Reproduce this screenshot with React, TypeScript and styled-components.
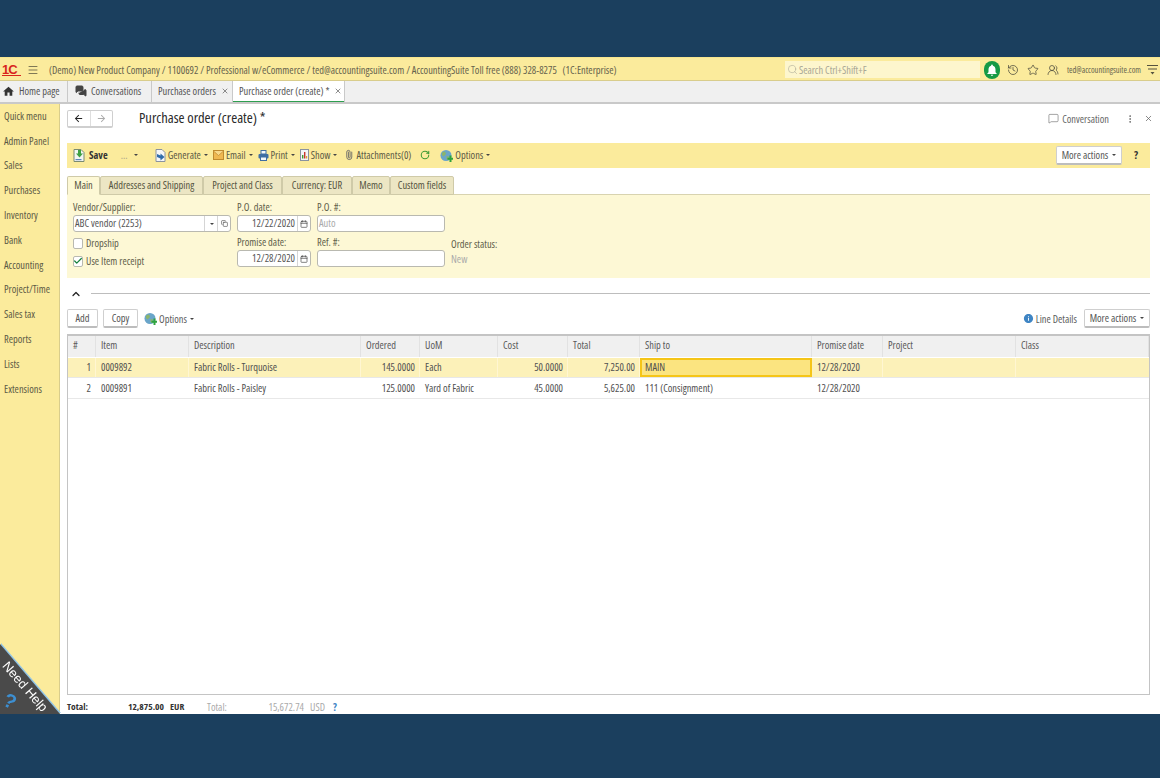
import React from 'react';
import styled, { createGlobalStyle } from 'styled-components';
import { MdHome, MdNotifications, MdInfo, MdArrowBack, MdArrowForward } from 'react-icons/md';
import {
  Menu, Search, History, Star, UsersRound, MessageSquare, MessagesSquare, EllipsisVertical, X,
  Paperclip, RotateCw, Calendar, Copy, Check, ChevronUp,
} from 'lucide-react';

const GlobalStyle = createGlobalStyle`
  html, body { margin: 0; padding: 0; background: #1b3f5e; }
  body {
    font-family: "Open Sans", "Liberation Sans", Arial, sans-serif;
    font-stretch: 75%;
    font-size: 10.4px;
    line-height: 12px;
    color: #555;
  }
  * { box-sizing: border-box; }
  svg { flex: none; }
`;

const Page = styled.div`
  width: 1160px;
  height: 778px;
  padding: 57px 0 64px;
  background: #1b3f5e;
`;

const Screen = styled.div`
  position: relative;
  height: 657px;
  background: #fff;
  display: flex;
  flex-direction: column;
  overflow: hidden;
`;

const TopBar = styled.div`
  height: 24px;
  padding: 1px 2px 0 2px;
  background: #fbeb9c;
  border-top: 1px solid #f6e58f;
  border-bottom: 1px solid #d9cd8c;
  display: flex;
  align-items: center;
  flex: none;
`;

const Logo = styled.span`
  width: 19px;
  font-family: "Liberation Sans", sans-serif;
  font-size: 13px;
  line-height: 11px;
  font-weight: 700;
  letter-spacing: -1px;
  color: #d8251c;
  border-bottom: 1px solid #d8251c;
`;

const BarText = styled.span`
  margin-left: 10px;
  color: #65624c;
  white-space: pre;
`;

const SearchBox = styled.div`
  margin-left: auto;
  width: 195px;
  height: 17px;
  background: #fdf6cd;
  display: flex;
  align-items: center;
  gap: 1px;
  padding-left: 2px;
  color: #a9a795;
`;

const BellBadge = styled.span`
  margin-left: 4px;
  width: 16px;
  height: 18px;
  border-radius: 8px;
  background: #169a45;
  color: #fff;
  display: flex;
  align-items: center;
  justify-content: center;
`;

const TopIcons = styled.div`
  display: flex;
  align-items: center;
  gap: 8px;
  margin-left: 7px;
  color: #4b4a3c;
`;

const UserMail = styled.span`
  margin-left: 8px;
  font-size: 8.4px;
  color: #65624c;
`;

const MenuEnd = styled.span`
  display: flex;
  margin-left: 6px;
  color: #55523e;
`;

const TabStrip = styled.div`
  height: 23px;
  flex: none;
  background: #f0f0f0;
  border-bottom: 2px solid #c9c9c9;
  display: flex;
`;

const WinTab = styled.div<{ $width: number; $active?: boolean }>`
  width: ${p => p.$width}px;
  border-right: 1px solid #c9c9c9;
  display: flex;
  align-items: center;
  gap: 4px;
  padding: 0 3px 1px 6px;
  color: #555;
  background: ${p => (p.$active ? '#fff' : 'transparent')};
  box-shadow: ${p => (p.$active ? 'inset 0 -1px 0 #2e9e4f' : 'none')};
  white-space: nowrap;
`;

const HomeIcon = styled(MdHome)`
  margin-left: -4px;
  color: #333;
`;

const ChatIcon = styled(MessagesSquare)`
  margin-left: 1px;
  color: #444;
  fill: #444;
`;

const TabClose = styled(X)`
  margin-left: auto;
  flex: none;
`;

const Body = styled.div`
  flex: 1;
  min-height: 0;
  display: flex;
`;

const Sidebar = styled.nav`
  width: 60px;
  flex: none;
  background: #fbeb9c;
  border-right: 1px solid #d9cd8c;
  display: flex;
  flex-direction: column;
`;

const SideItem = styled.div`
  height: 24.8px;
  padding: 0 0 1px 4px;
  display: flex;
  align-items: center;
  color: #5c5a45;
  white-space: nowrap;
`;

const Main = styled.main`
  flex: 1;
  min-width: 0;
  padding: 6px 10px 0 7px;
  display: flex;
  flex-direction: column;
`;

const HeadRow = styled.div`
  height: 18px;
  display: flex;
  align-items: center;
  flex: none;
`;

const NavGroup = styled.div`
  width: 46px;
  height: 18px;
  border: 1px solid #cfcfcf;
  border-bottom-width: 2px;
  border-radius: 2px;
  display: flex;
  color: #333;
`;

const NavBtn = styled.span<{ $off?: boolean }>`
  flex: 1;
  display: flex;
  align-items: center;
  justify-content: center;
  color: ${p => (p.$off ? '#aaa' : '#222')};
  & + & { border-left: 1px solid #dedede; }
`;

const Title = styled.h1`
  margin: 0 0 3px 26px;
  font-size: 14.500px;
  line-height: 16px;
  font-weight: 400;
  color: #2a2a2a;
`;

const HeadRight = styled.div`
  margin-left: auto;
  margin-right: -3px;
  padding-bottom: 1px;
  display: flex;
  align-items: center;
  color: #666;
`;

const ConvLabel = styled.span`
  margin: 0 16px 0 3px;
`;

const HeadClose = styled(X)`
  margin-left: 9px;
`;

const Toolbar = styled.div`
  height: 25px;
  margin-top: 15px;
  flex: none;
  background: #fbeb9c;
  display: flex;
  align-items: center;
  padding: 0 0 1px 6px;
  color: #5c5a45;
`;

const SaveLabel = styled.b`
  margin: 0 13px 0 4px;
  color: #333;
`;

const ToolItem = styled.span<{ $gap?: number }>`
  display: flex;
  align-items: center;
  gap: 2px;
  margin-right: ${p => p.$gap ?? 6}px;
  white-space: nowrap;
`;

const Dots = styled.span`
  color: #aaa48a;
  margin-right: 3px;
`;

const Clip = styled(Paperclip)`
  transform: rotate(-45deg);
`;

const Caret = styled.i`
  display: inline-block;
  width: 0;
  height: 0;
  margin-left: 1px;
  border: 2px solid transparent;
  border-top-color: #444;
  border-bottom-width: 0;
`;

const ActionBtn = styled.button<{ $width: number }>`
  width: ${p => p.$width}px;
  height: 19px;
  padding: 0;
  background: #fff;
  border: 1px solid #cfcfcf;
  border-bottom: 2px solid #bdbdbd;
  border-radius: 2px;
  font: inherit;
  font-stretch: 75%;
  color: #555;
  white-space: nowrap;
  display: flex;
  align-items: center;
  justify-content: center;
  gap: 3px;
`;

const ToolbarEnd = styled.div`
  margin-left: auto;
  display: flex;
  align-items: center;
`;

const Help = styled.b`
  width: 28px;
  text-align: center;
  color: #333;
  font-size: 11px;
`;

const FormTabs = styled.div`
  height: 18px;
  margin-top: 8px;
  flex: none;
  display: flex;
  align-items: flex-end;
`;

const FormTab = styled.div<{ $width: number; $active?: boolean }>`
  width: ${p => p.$width}px;
  height: 19px;
  margin-bottom: -1px;
  padding-bottom: 2px;
  display: flex;
  align-items: center;
  justify-content: center;
  background: ${p => (p.$active ? '#fdf8d5' : '#ece6c4')};
  border: 1px solid #cfcaa8;
  border-bottom-color: ${p => (p.$active ? '#fdf8d5' : '#cfcaa8')};
  border-radius: 2px 2px 0 0;
  color: #55543f;
  white-space: nowrap;
  position: relative;
`;

const FormPanel = styled.section`
  height: 84px;
  flex: none;
  background: #fdf8d5;
  border-top: 1px solid #d8d3b0;
  padding: 6px 0 0 6px;
  display: grid;
  grid-template-columns: 164px 80px 134px 1fr;
  grid-template-rows: 35px 35px;
  column-gap: 0;
`;

const Field = styled.div`
  display: flex;
  flex-direction: column;
  gap: 2px;
  color: #605e4a;
`;

const StatusField = styled(Field)`
  gap: 3px;
  padding-top: 2px;
`;

const FieldBox = styled.div<{ $width: number }>`
  width: ${p => p.$width}px;
  height: 17px;
  background: #fff;
  border: 1px solid #b9b9b0;
  border-radius: 3px;
  display: flex;
  align-items: center;
  color: #555;
`;

const BoxText = styled.span<{ $right?: boolean; $muted?: boolean }>`
  flex: 1;
  padding: 0 2px 1px 1px;
  text-align: ${p => (p.$right ? 'right' : 'left')};
  color: ${p => (p.$muted ? '#aaa' : 'inherit')};
  white-space: nowrap;
`;

const BoxBtn = styled.span`
  width: 13px;
  height: 100%;
  flex: none;
  border-left: 1px solid #d5d5d5;
  display: flex;
  align-items: center;
  justify-content: center;
  color: #444;
`;

const Checks = styled.div`
  display: flex;
  flex-direction: column;
  gap: 6px;
  padding-top: 1px;
  color: #605e4a;
`;

const CheckRow = styled.label`
  display: flex;
  align-items: center;
  gap: 3px;
`;

const CheckBox = styled.span`
  width: 10px;
  height: 11px;
  background: #fff;
  border: 1px solid #b9b9b0;
  border-radius: 2px;
  display: flex;
  align-items: center;
  justify-content: center;
  color: #15803d;
`;

const MutedText = styled.span`
  color: #aaa;
`;

const Collapse = styled.div`
  height: 31px;
  flex: none;
  display: flex;
  align-items: center;
  gap: 9px;
  padding-left: 3px;
  color: #222;
`;

const Rule = styled.div`
  flex: 1;
  height: 1px;
  background: #bdbdbd;
`;

const TableBar = styled.div`
  height: 19px;
  flex: none;
  display: flex;
  align-items: center;
  gap: 3px;
  color: #5c5c5c;
`;

const BarLeft = styled.div`
  display: flex;
  align-items: center;
  gap: 5px;
`;

const BarRight = styled.div`
  margin-left: auto;
  display: flex;
  align-items: center;
  gap: 7px;
`;

const TableOptions = styled(ToolItem)`
  margin-left: 3px;
`;

const TableBox = styled.div`
  margin-top: 6px;
  height: 361px;
  flex: none;
  border: 1px solid #c4c4c4;
  border-top-width: 2px;
  border-left-width: 1px;
`;

const COLUMNS = '28px 93px 172px 59px 78px 70px 72px 172px 71px 133px 1fr';

const HeaderRow = styled.div`
  height: 21px;
  display: grid;
  grid-template-columns: ${COLUMNS};
  background: #f0f0f0;
`;

const HeaderCell = styled.div`
  display: flex;
  align-items: center;
  padding: 0 0 3px 5px;
  border-right: 1px solid #e2e2e2;
  color: #5a5a5a;
  white-space: nowrap;
`;

const DataRow = styled.div<{ $current?: boolean }>`
  height: 21px;
  display: grid;
  grid-template-columns: ${COLUMNS};
  background: ${p => (p.$current ? '#fcf1b9' : '#fff')};
  border-top: 1px solid #fff;
  border-bottom: 1px solid #e8e8e8;
`;

const Cell = styled.div<{ $right?: boolean; $focus?: boolean; $current?: boolean }>`
  display: flex;
  align-items: center;
  justify-content: ${p => (p.$right ? 'flex-end' : 'flex-start')};
  padding: ${p => (p.$right ? '0 4px 1px 0' : '0 0 1px 5px')};
  color: #505050;
  white-space: nowrap;
  background: ${p => (p.$focus ? '#fbe480' : 'transparent')};
  border-right: 1px solid ${p => (p.$current ? '#fff6d2' : 'transparent')};
  ${p => (p.$focus ? 'outline: 2px solid #f5c518; outline-offset: -2px;' : '')}
`;

const Footer = styled.div`
  height: 13px;
  margin-top: 5px;
  flex: none;
  display: grid;
  grid-template-columns: 50px 47px 43px 33px 64px 29px 12px;
  align-items: center;
`;

const FootStrong = styled.b<{ $right?: boolean }>`
  color: #333;
  font-weight: 700;
  font-size: 9.5px;
  text-align: ${p => (p.$right ? 'right' : 'left')};
`;

const FootCurrency = styled(FootStrong)`
  padding-left: 6px;
`;

const FootMuted = styled.span<{ $right?: boolean }>`
  color: #aaa;
  text-align: ${p => (p.$right ? 'right' : 'left')};
`;

const FootUnit = styled(FootMuted)`
  padding-left: 6px;
`;

const FootHelp = styled.b`
  color: #3c83c4;
`;

const HelpCorner = styled.div`
  position: absolute;
  left: 0;
  bottom: 0;
  width: 60px;
  height: 70px;
  filter: drop-shadow(1px -1px 0 #8fc4e8);
`;

const HelpShape = styled.div`
  position: relative;
  width: 100%;
  height: 100%;
  background: #4a4a4a;
  clip-path: polygon(0 0, 100% 100%, 0 100%);
  color: #fff;
`;

const HelpText = styled.span`
  position: absolute;
  left: 10px;
  top: 15px;
  font-family: "Liberation Sans", sans-serif;
  font-stretch: normal;
  font-size: 13px;
  line-height: 13px;
  white-space: nowrap;
  transform: rotate(49deg);
  transform-origin: left top;
`;

const HelpMark = styled.b`
  position: absolute;
  left: 4px;
  top: 46px;
  font-family: "Liberation Sans", sans-serif;
  font-size: 20px;
  line-height: 22px;
  color: #3d8fd1;
  transform: rotate(25deg);
`;

const GlobeIcon = () => (
  <svg width="13" height="13" viewBox="0 0 13 13">
    <circle cx="6" cy="6.5" r="5.5" fill="#6aa5c9" />
    <path d="M2 3.5 5 2.5 6 5 3.5 7.5 2 6ZM6.5 7 9 7.5 8 11 6.5 10Z" fill="#8cb56b" />
    <path d="M9.5 6.5h2v2.2h1.5v2h-1.5V13h-2v-2.3H7.5v-2h2Z" fill="#2fa33f" />
  </svg>
);

const SaveIcon = () => (
  <svg width="12" height="13" viewBox="0 0 12 13">
    <path d="M1 .5h7l3 3v9H1Z" fill="#f4f6f2" stroke="#7a8b73" />
    <path d="M5 1v3.5h-2l3.5 4 3.5-4H8V1Z" fill="#3fa043" />
    <path d="M2.5 10h6v1.2h-6Z" fill="#5c86b8" />
  </svg>
);

const GenerateIcon = () => (
  <svg width="11" height="13" viewBox="0 0 11 13">
    <path d="M1 .5h6l3 3v9H1Z" fill="#f5f6f8" stroke="#8a93a0" />
    <path d="M2 5l3.500 1.500V4.500L9.500 8l-4 3.500v-2L2 8Z" fill="#2f6cab" />
  </svg>
);

const MailIcon = () => (
  <svg width="11" height="10" viewBox="0 0 11 10">
    <rect x=".5" y=".5" width="10" height="9" fill="#efb851" stroke="#bf8a2f" />
    <path d="M.5 1 5.500 5.500 10.500 1" fill="#f8d889" stroke="#bf8a2f" strokeWidth=".7" />
  </svg>
);

const PrintIcon = () => (
  <svg width="11" height="11" viewBox="0 0 11 11">
    <rect x="3" y=".5" width="5" height="3.5" fill="#f4f7fb" stroke="#3f6ea3" />
    <rect x=".5" y="4" width="10" height="4.5" rx="1" fill="#3f6ea3" />
    <rect x="2.5" y="7" width="6" height="3.5" fill="#f4f7fb" stroke="#3f6ea3" />
  </svg>
);

const ShowIcon = () => (
  <svg width="9" height="12" viewBox="0 0 9 12">
    <rect x=".5" y=".5" width="8" height="11" fill="#f4f5f8" stroke="#8a93a0" />
    <path d="M2 6h1.400v3.500H2Z" fill="#3f9b35" />
    <path d="M4 3h1.400v6.500H4Z" fill="#c9372c" />
    <path d="M6 7h1.200v2.500H6Z" fill="#e0a52b" />
  </svg>
);

const EndMenuIcon = () => (
  <svg width="11" height="11" viewBox="0 0 11 11">
    <path d="M0 1.500h11M1 5h9" stroke="currentColor" strokeWidth="1.200" />
    <path d="M3.500 8h4L5.500 10.500Z" fill="currentColor" />
  </svg>
);

const sideItems = [
  'Quick menu', 'Admin Panel', 'Sales', 'Purchases', 'Inventory', 'Bank', 'Accounting',
  'Project/Time', 'Sales tax', 'Reports', 'Lists', 'Extensions',
];

const formTabs: [string, number][] = [
  ['Addresses and Shipping', 103], ['Project and Class', 79], ['Currency: EUR', 70], ['Memo', 38], ['Custom fields', 64],
];

const headers = ['#', 'Item', 'Description', 'Ordered', 'UoM', 'Cost', 'Total', 'Ship to', 'Promise date', 'Project', 'Class'];

const lines = [
  { n: '1', item: '0009892', desc: 'Fabric Rolls - Turquoise', qty: '145.0000', uom: 'Each', cost: '50.0000', total: '7,250.00', ship: 'MAIN', date: '12/28/2020' },
  { n: '2', item: '0009891', desc: 'Fabric Rolls - Paisley', qty: '125.0000', uom: 'Yard of Fabric', cost: '45.0000', total: '5,625.00', ship: '111 (Consignment)', date: '12/28/2020' },
];

export default function App() {
  return (
    <Page>
      <GlobalStyle />
      <Screen>
        <TopBar>
          <Logo>1C</Logo>
          <Menu size={12} strokeWidth={1.5} color="#55523e" style={{ marginLeft: 6 }} />
          <BarText>(Demo) New Product Company / 1100692 / Professional w/eCommerce / ted@accountingsuite.com / AccountingSuite Toll free (888) 328-8275   (1C:Enterprise)</BarText>
          <SearchBox><Search size={11} strokeWidth={1.2} />Search Ctrl+Shift+F</SearchBox>
          <BellBadge><MdNotifications size={14} /></BellBadge>
          <TopIcons>
            <History size={12} strokeWidth={1.5} />
            <Star size={12} strokeWidth={1.5} />
            <UsersRound size={12} strokeWidth={1.5} />
          </TopIcons>
          <UserMail>ted@accountingsuite.com</UserMail>
          <MenuEnd><EndMenuIcon /></MenuEnd>
        </TopBar>
        <TabStrip>
          <WinTab $width={68}><HomeIcon size={13} />Home page</WinTab>
          <WinTab $width={84}><ChatIcon size={12} /> Conversations</WinTab>
          <WinTab $width={81}>Purchase orders<TabClose size={8} /></WinTab>
          <WinTab $width={112} $active>Purchase order (create) *<TabClose size={8} /></WinTab>
        </TabStrip>
        <Body>
          <Sidebar>
            {sideItems.map(s => <SideItem key={s}>{s}</SideItem>)}
          </Sidebar>
          <Main>
            <HeadRow>
              <NavGroup>
                <NavBtn><MdArrowBack size={11} /></NavBtn>
                <NavBtn $off><MdArrowForward size={11} /></NavBtn>
              </NavGroup>
              <Title>Purchase order (create) *</Title>
              <HeadRight>
                <MessageSquare size={11} strokeWidth={1.3} />
                <ConvLabel>Conversation</ConvLabel>
                <EllipsisVertical size={10} />
                <HeadClose size={9} />
              </HeadRight>
            </HeadRow>
            <Toolbar>
              <SaveIcon />
              <SaveLabel>Save</SaveLabel>
              <ToolItem $gap={17}><Dots>...</Dots><Caret /></ToolItem>
              <ToolItem $gap={5}><GenerateIcon />Generate<Caret /></ToolItem>
              <ToolItem $gap={5}><MailIcon />Email<Caret /></ToolItem>
              <ToolItem $gap={5}><PrintIcon />Print<Caret /></ToolItem>
              <ToolItem $gap={7}><ShowIcon />Show<Caret /></ToolItem>
              <ToolItem $gap={9}><Clip size={10} color="#666" />Attachments(0)</ToolItem>
              <ToolItem $gap={10}><RotateCw size={10} color="#3f9b35" strokeWidth={2.5} /></ToolItem>
              <ToolItem><GlobeIcon />Options<Caret /></ToolItem>
              <ToolbarEnd>
                <ActionBtn $width={66}>More actions<Caret /></ActionBtn>
                <Help>?</Help>
              </ToolbarEnd>
            </Toolbar>
            <FormTabs>
              <FormTab $width={33} $active>Main</FormTab>
              {formTabs.map(([label, w]) => <FormTab key={label} $width={w}>{label}</FormTab>)}
            </FormTabs>
            <FormPanel>
              <Field>
                Vendor/Supplier:
                <FieldBox $width={158}>
                  <BoxText>ABC vendor (2253)</BoxText>
                  <BoxBtn><Caret /></BoxBtn>
                  <BoxBtn><Copy size={7} /></BoxBtn>
                </FieldBox>
              </Field>
              <Field>
                P.O. date:
                <FieldBox $width={74}>
                  <BoxText $right>12/22/2020</BoxText>
                  <BoxBtn><Calendar size={8} /></BoxBtn>
                </FieldBox>
              </Field>
              <Field>
                P.O. #:
                <FieldBox $width={128}>
                  <BoxText $muted>Auto</BoxText>
                </FieldBox>
              </Field>
              <div />
              <Checks>
                <CheckRow><CheckBox />Dropship</CheckRow>
                <CheckRow><CheckBox><Check size={10} strokeWidth={3} /></CheckBox>Use Item receipt</CheckRow>
              </Checks>
              <Field>
                Promise date:
                <FieldBox $width={74}>
                  <BoxText $right>12/28/2020</BoxText>
                  <BoxBtn><Calendar size={8} /></BoxBtn>
                </FieldBox>
              </Field>
              <Field>
                Ref. #:
                <FieldBox $width={128} />
              </Field>
              <StatusField>
                Order status:
                <MutedText>New</MutedText>
              </StatusField>
            </FormPanel>
            <Collapse>
              <ChevronUp size={12} strokeWidth={2.5} />
              <Rule />
            </Collapse>
            <TableBar>
              <BarLeft>
                <ActionBtn $width={31}>Add</ActionBtn>
                <ActionBtn $width={35}>Copy</ActionBtn>
              </BarLeft>
              <TableOptions><GlobeIcon />Options<Caret /></TableOptions>
              <BarRight>
                <ToolItem $gap={0}><MdInfo size={11} color="#3f85c4" />Line Details</ToolItem>
                <ActionBtn $width={66}>More actions<Caret /></ActionBtn>
              </BarRight>
            </TableBar>
            <TableBox>
              <HeaderRow>
                {headers.map(h => <HeaderCell key={h}>{h}</HeaderCell>)}
              </HeaderRow>
              {lines.map((l, i) => {
                const cur = i === 0;
                return (
                  <DataRow key={l.n} $current={cur}>
                    <Cell $right $current={cur}>{l.n}</Cell>
                    <Cell $current={cur}>{l.item}</Cell>
                    <Cell $current={cur}>{l.desc}</Cell>
                    <Cell $right $current={cur}>{l.qty}</Cell>
                    <Cell $current={cur}>{l.uom}</Cell>
                    <Cell $right $current={cur}>{l.cost}</Cell>
                    <Cell $right $current={cur}>{l.total}</Cell>
                    <Cell $focus={cur}>{l.ship}</Cell>
                    <Cell $current={cur}>{l.date}</Cell>
                    <Cell $current={cur} />
                    <Cell />
                  </DataRow>
                );
              })}
            </TableBox>
            <Footer>
              <FootStrong>Total:</FootStrong>
              <FootStrong $right>12,875.00</FootStrong>
              <FootCurrency>EUR</FootCurrency>
              <FootMuted>Total:</FootMuted>
              <FootMuted $right>15,672.74</FootMuted>
              <FootUnit>USD</FootUnit>
              <FootHelp>?</FootHelp>
            </Footer>
          </Main>
        </Body>
        <HelpCorner>
          <HelpShape>
            <HelpText>Need Help</HelpText>
            <HelpMark>?</HelpMark>
          </HelpShape>
        </HelpCorner>
      </Screen>
    </Page>
  );
}
